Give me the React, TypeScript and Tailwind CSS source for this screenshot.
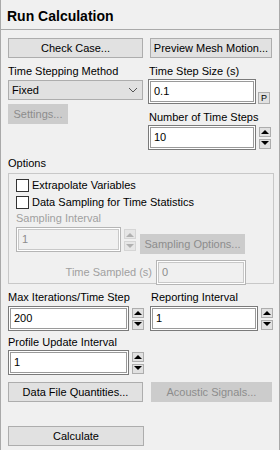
import React from "react";

const font = { fontFamily: '"Liberation Sans", Arial, sans-serif' };

const Btn = ({ label, disabled = false, className = "" }: { label: string; disabled?: boolean; className?: string }) => (
  <div
    className={`flex h-[20px] items-center justify-center whitespace-nowrap border text-[11px] leading-none ${
      disabled ? "border-[#cccccc] bg-[#cccccc] text-[#8c8c8c]" : "border-[#adadad] bg-[#e1e1e1] text-black"
    } ${className}`}
  >
    {label}
  </div>
);

const Field = ({ value, disabled = false, className = "" }: { value: string; disabled?: boolean; className?: string }) => (
  <div
    className={`flex h-[25px] items-center border px-[5px] text-[11px] ${
      disabled
        ? "border-[#b5b5b5] bg-[#f0f0f0] text-[#8c8c8c] shadow-[inset_0_0_0_1px_#ffffff,inset_0_0_0_2px_#c8c8c8]"
        : "border-[#7a7a7a] bg-white text-black shadow-[inset_0_0_0_1px_#ffffff,inset_0_0_0_2px_#9a9a9a]"
    } ${className}`}
  >
    {value}
  </div>
);

const Tri = ({ up, disabled }: { up: boolean; disabled?: boolean }) => (
  <svg width="8" height="5" viewBox="0 0 8 5">
    <path d={up ? "M0 5 L4 1 L8 5 Z" : "M0 0 L8 0 L4 4 Z"} fill={disabled ? "#b0b0b0" : "#000"} />
  </svg>
);

const Spin = ({ disabled = false }: { disabled?: boolean }) => (
  <div className="flex flex-col gap-[2px]">
    {[true, false].map((up) => (
      <div
        key={String(up)}
        className={`flex h-[10px] w-[12px] items-center justify-center border ${
          disabled ? "border-[#d5d5d5] bg-[#e6e6e6]" : "border-[#adadad] bg-[#e1e1e1]"
        }`}
      >
        <Tri up={up} disabled={disabled} />
      </div>
    ))}
  </div>
);

const Check = ({ label }: { label: string }) => (
  <div className="flex h-[16px] items-center gap-[3px] whitespace-nowrap text-[11px]">
    <div className="h-[13px] w-[13px] border border-[#333333] bg-white" />
    <span>{label}</span>
  </div>
);

const Label = ({ text, className = "" }: { text: string; className?: string }) => (
  <div className={`h-[12px] whitespace-nowrap text-[11px] leading-none ${className}`}>{text}</div>
);

export default function App() {
  return (
    <div className="h-[450px] w-[280px] overflow-hidden border-x border-[#a9a9a9] bg-[#f0f0f0] text-black" style={font}>
      {/* Title */}
      <div className="h-[30px] border-b border-[#a9a9a9] px-[6px] pt-[9px] text-[14px] font-bold leading-none">Run Calculation</div>

      <div className="px-[7px]">
        {/* top section */}
        <div className="mt-[8px] flex gap-[5px]">
          <div className="flex w-[138px] flex-col">
            <Btn label="Check Case..." />
            <Label text="Time Stepping Method" className="mt-[8px]" />
            <div className="mt-[2px] flex h-[20px] items-center justify-between border border-[#adadad] bg-[#e1e1e1] pl-[3px] pr-[4px] text-[11px]">
              <span>Fixed</span>
              <svg width="10" height="6" viewBox="0 0 10 6">
                <path d="M1 1 L5 5 L9 1" stroke="#555" strokeWidth="1" fill="none" />
              </svg>
            </div>
            <Btn label="Settings..." disabled className="mt-[4px] w-[60px]" />
          </div>

          <div className="flex flex-1 flex-col">
            <Btn label="Preview Mesh Motion..." className="ml-[2px] w-[122px]" />
            <Label text="Time Step Size (s)" className="mt-[8px] pl-[1px]" />
            <div className="mt-[1px] flex items-end gap-[2px]">
              <Field value="0.1" className="w-[108px]" />
              <div className="flex h-[12px] w-[12px] items-center justify-center border border-[#adadad] bg-[#e1e1e1] text-[9px] leading-none">P</div>
            </div>
            <Label text="Number of Time Steps" className="mt-[8px] pl-[1px]" />
            <div className="mt-[1px] flex items-center gap-[3px]">
              <Field value="10" className="w-[108px]" />
              <Spin />
            </div>
          </div>
        </div>

        {/* Options */}
        <Label text="Options" className="mt-[8px]" />
        <div className="mt-[3px] h-[111px] w-[266px] border border-[#c8c8c8] px-[7px] pt-[3px]">
          <Check label="Extrapolate Variables" />
          <div className="mt-[1px]">
            <Check label="Data Sampling for Time Statistics" />
          </div>
          <Label text="Sampling Interval" className="mt-[3px] text-[#a0a0a0]" />
          <div className="mt-[2px] flex items-start gap-[3px]">
            <Field value="1" disabled className="w-[105px]" />
            <div className="mt-[2px]">
              <Spin disabled />
            </div>
            <Btn label="Sampling Options..." disabled className="ml-[1px] mt-[7px] w-[105px]" />
          </div>
          <div className="mt-[6px] flex items-center justify-end gap-[4px] pr-[20px]">
            <span className="whitespace-nowrap text-[11px] text-[#a0a0a0]">Time Sampled (s)</span>
            <Field value="0" disabled className="w-[90px]" />
          </div>
        </div>

        {/* Iterations */}
        <div className="mt-[8px] grid grid-cols-[142px_1fr]">
          <div>
            <Label text="Max Iterations/Time Step" />
            <div className="mt-[2px] flex items-center gap-[3px]">
              <Field value="200" className="w-[121px]" />
              <Spin />
            </div>
            <Label text="Profile Update Interval" className="mt-[6px]" />
            <div className="mt-[1px] flex items-center gap-[3px]">
              <Field value="1" className="w-[121px]" />
              <Spin />
            </div>
          </div>
          <div>
            <Label text="Reporting Interval" className="pl-[1px]" />
            <div className="mt-[2px] flex items-center gap-[3px]">
              <Field value="1" className="w-[108px]" />
              <Spin />
            </div>
          </div>
        </div>

        <div className="mt-[7px] flex gap-[8px]">
          <Btn label="Data File Quantities..." className="w-[136px]" />
          <Btn label="Acoustic Signals..." disabled className="w-[122px]" />
        </div>

        <Btn label="Calculate" className="mt-[24px] h-[19px] w-[136px]" />
      </div>
    </div>
  );
}
